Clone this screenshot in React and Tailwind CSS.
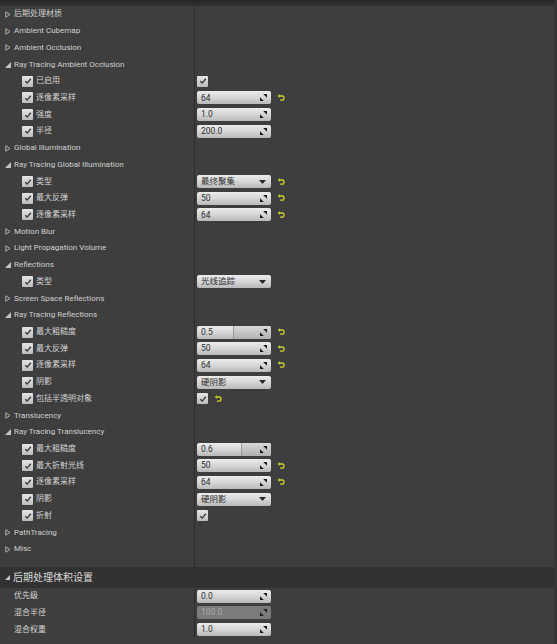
import React from 'react';

const FONT = { fontFamily: 'Roboto, "Noto Sans CJK SC", "Noto Sans", sans-serif' };

const Collapsed = () => (
  <svg width="6" height="7" viewBox="0 0 6 7" className="shrink-0">
    <path d="M0.8 0.8 L5 3.5 L0.8 6.2 Z" fill="none" stroke="#bdbdbd" strokeWidth="0.9" />
  </svg>
);

const Expanded = ({ size = 6 }) => (
  <svg width={size} height={size} viewBox="0 0 6 6" className="shrink-0">
    <path d="M6 0 L6 6 L0 6 Z" fill="#c4c4c4" />
  </svg>
);

const Check = ({ className = '' }) => (
  <div className={`w-[11px] h-[11px] rounded-[1px] bg-gradient-to-b from-[#e6e6e6] to-[#bcbcbc] flex items-center justify-center shrink-0 ${className}`}>
    <svg width="8" height="8" viewBox="0 0 8 8">
      <path d="M1.3 4.3 L3.2 6.1 L6.8 1.8" fill="none" stroke="#3a3a3a" strokeWidth="1.4" />
    </svg>
  </div>
);

const SpinIcon = () => (
  <svg width="7" height="7" viewBox="0 0 7 7" className="shrink-0">
    <path d="M7 0 L7 3.8 L3.2 0 Z" fill="#1a1a1a" />
    <path d="M0 7 L0 3.2 L3.8 7 Z" fill="#1a1a1a" />
  </svg>
);

const Reset = () => (
  <svg width="8" height="8" viewBox="0 0 8 8" className="ml-[6px] shrink-0">
    <path d="M2.2 2 L5.4 2 Q7 2 7 4 Q7 6.2 5 6.2 L3 6.2" fill="none" stroke="#cfcf2c" strokeWidth="1.3" />
    <path d="M0.6 2 L3 0.2 L3 3.8 Z" fill="#cfcf2c" />
  </svg>
);

const Spin = ({ value, split, disabled }) => (
  <div
    className={`relative w-[74px] h-[13px] rounded-[2px] flex items-center justify-between pl-[4px] pr-[4px] text-[8.5px] ${
      disabled
        ? 'bg-[#7b7b7b] text-[#a8a8a8]'
        : 'bg-gradient-to-b from-[#ececec] via-[#d6d6d6] to-[#b9b9b9] text-[#2e2e2e]'
    }`}
  >
    {split && (
      <div
        className="absolute top-0 bottom-0 right-0 rounded-r-[2px] bg-gradient-to-b from-[#d9d9d9] to-[#b0b0b0] border-l border-[#9a9a9a]"
        style={{ left: split }}
      />
    )}
    <span className="relative">{value}</span>
    <span className="relative">
      <SpinIcon />
    </span>
  </div>
);

const Combo = ({ value }) => (
  <div className="w-[74px] h-[13px] rounded-[2px] flex items-center justify-between pl-[4px] pr-[5px] text-[8.5px] bg-gradient-to-b from-[#ececec] via-[#d6d6d6] to-[#b9b9b9] text-[#2e2e2e]">
    <span>{value}</span>
    <svg width="7" height="4" viewBox="0 0 7 4">
      <path d="M0 0 L7 0 L3.5 4 Z" fill="#2a2a2a" />
    </svg>
  </div>
);

const Row = ({ left, right }) => (
  <div className="flex h-[16.72px]">
    <div className="w-[195px] shrink-0 border-r border-[#2c2c2c] flex items-center">{left}</div>
    <div className="flex-1 flex items-center pl-[2px]">{right}</div>
  </div>
);

const Category = ({ title, open }) => (
  <Row
    left={
      <div className="flex items-center gap-[3px] pl-[5px] text-[8px] text-[#d0d0d0]">
        {open ? <Expanded /> : <Collapsed />}
        <span>{title}</span>
      </div>
    }
  />
);

const Prop = ({ label, children, reset }) => (
  <Row
    left={
      <div className="flex items-center gap-[3px] pl-[22px] text-[8px] text-[#d4d4d4]">
        <Check />
        <span>{label}</span>
      </div>
    }
    right={
      <div className="flex items-center">
        {children}
        {reset && <Reset />}
      </div>
    }
  />
);

const Plain = ({ label, children }) => (
  <Row
    left={<div className="pl-[14px] text-[8px] text-[#d4d4d4]">{label}</div>}
    right={children}
  />
);

export default function App() {
  return (
    <div className="w-[557px] h-[644px] bg-[#3e3e3e] flex overflow-hidden" style={FONT}>
      <div className="flex-1 flex flex-col">
        <div className="h-[6px] bg-gradient-to-b from-[#262626] to-[#333333]" />
        <Category title="后期处理材质" />
        <Category title="Ambient Cubemap" />
        <Category title="Ambient Occlusion" />
        <Category title="Ray Tracing Ambient Occlusion" open />
        <Prop label="已启用"><Check /></Prop>
        <Prop label="逐像素采样" reset><Spin value="64" /></Prop>
        <Prop label="强度"><Spin value="1.0" /></Prop>
        <Prop label="半径"><Spin value="200.0" /></Prop>
        <Category title="Global Illumination" />
        <Category title="Ray Tracing Global Illumination" open />
        <Prop label="类型" reset><Combo value="最终聚集" /></Prop>
        <Prop label="最大反弹" reset><Spin value="50" /></Prop>
        <Prop label="逐像素采样" reset><Spin value="64" /></Prop>
        <Category title="Motion Blur" />
        <Category title="Light Propagation Volume" />
        <Category title="Reflections" open />
        <Prop label="类型"><Combo value="光线追踪" /></Prop>
        <Category title="Screen Space Reflections" />
        <Category title="Ray Tracing Reflections" open />
        <Prop label="最大粗糙度" reset><Spin value="0.5" split="36px" /></Prop>
        <Prop label="最大反弹" reset><Spin value="50" /></Prop>
        <Prop label="逐像素采样" reset><Spin value="64" /></Prop>
        <Prop label="阴影"><Combo value="硬阴影" /></Prop>
        <Prop label="包括半透明对象" reset><Check /></Prop>
        <Category title="Translucency" />
        <Category title="Ray Tracing Translucency" open />
        <Prop label="最大粗糙度"><Spin value="0.6" split="44px" /></Prop>
        <Prop label="最大折射光线" reset><Spin value="50" /></Prop>
        <Prop label="逐像素采样" reset><Spin value="64" /></Prop>
        <Prop label="阴影"><Combo value="硬阴影" /></Prop>
        <Prop label="折射"><Check /></Prop>
        <Category title="PathTracing" />
        <Category title="Misc" />
        <div className="h-[9px] flex">
          <div className="w-[195px] border-r border-[#2c2c2c]" />
        </div>
        <div className="h-[21px] bg-[#323232] flex items-center gap-[3px] pl-[5px] text-[10px] text-[#d8d8d8]">
          <Expanded size={5} />
          <span>后期处理体积设置</span>
        </div>
        <Plain label="优先级"><Spin value="0.0" /></Plain>
        <Plain label="混合半径"><Spin value="100.0" disabled /></Plain>
        <Plain label="混合权重"><Spin value="1.0" /></Plain>
      </div>
      <div className="w-[3px] bg-[#353535]" />
    </div>
  );
}
